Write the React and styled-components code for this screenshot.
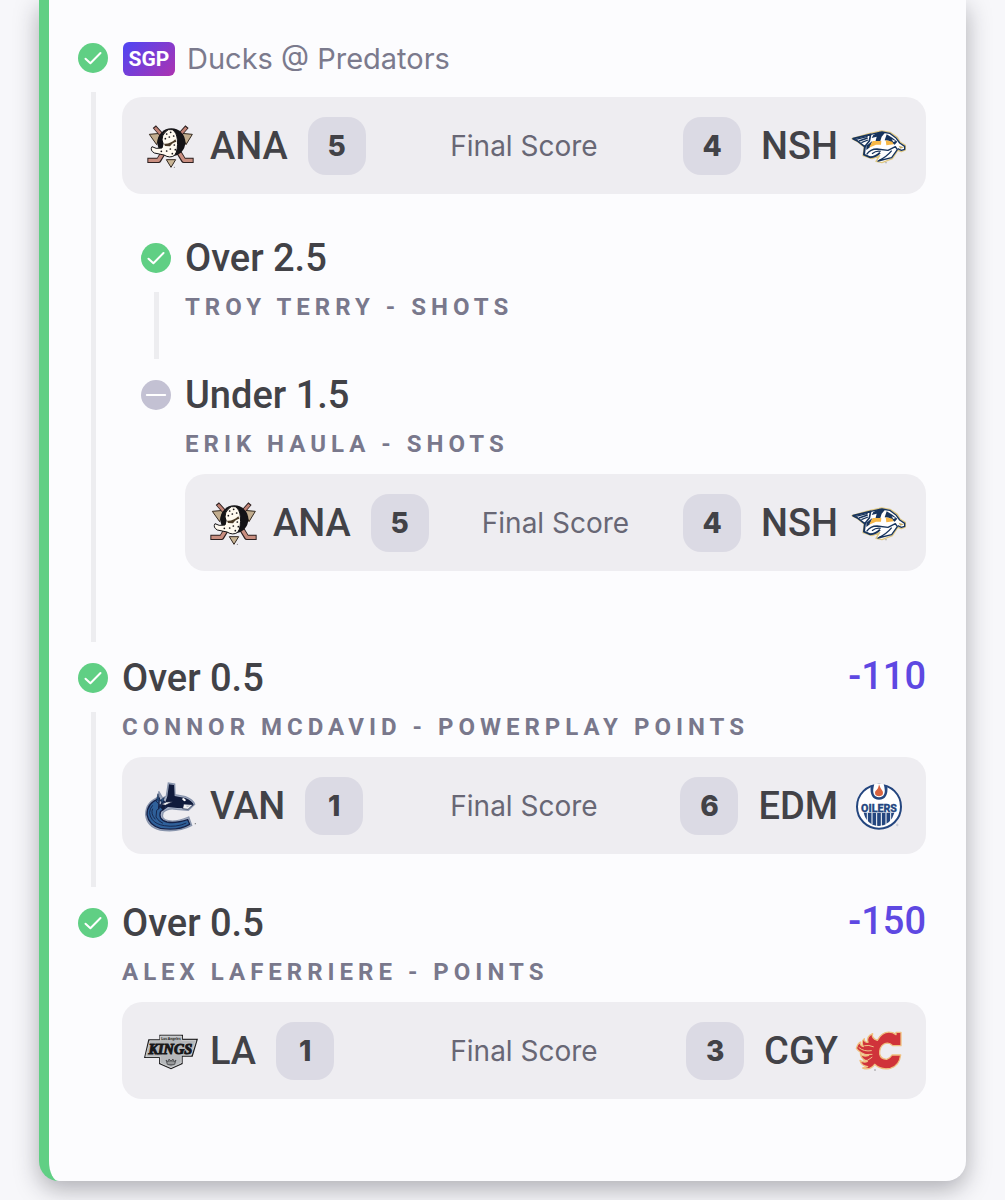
import React from "react";
import styled, { createGlobalStyle } from "styled-components";

const GlobalStyle = createGlobalStyle`
  * { box-sizing: border-box; }
  body {
    margin: 0;
    background: #f7f7fa;
    font-family: Roboto, "Liberation Sans", sans-serif;
    color: #424247;
  }
  ul { list-style: none; margin: 0; padding: 0; }
  h2, h3, p { margin: 0; font-weight: inherit; }
`;

const Page = styled.main`
  padding: 0 39px 19px;
  overflow: hidden;
`;

const BetCard = styled.section`
  padding: 33px 40px 38px 29px;
  background: #fcfcfe;
  border-left: 10px solid #60cf84;
  border-radius: 0 0 20px 20px;
  box-shadow: 0 8px 24px rgba(30, 30, 40, 0.34);
`;

const Leg = styled.li`
  display: flex;
  gap: 14px;
`;

const Rail = styled.div`
  display: flex;
  flex-direction: column;
  align-items: center;
  gap: 19px;
  flex: 0 0 30px;
  padding: 10px 0 11px;
`;

const StatusIcon = styled.svg`
  display: block;
  width: 30px;
  height: 30px;
`;

const RailLine = styled.span`
  flex: 1;
  width: 5px;
  background: #ededf0;
`;

const LegBody = styled.div`
  flex: 1;
  min-width: 0;
  padding-bottom: ${(p) => (p.$hasNested ? "38px" : "44px")};
`;

const LegHeader = styled.div`
  display: flex;
  align-items: center;
  justify-content: space-between;
  height: 50px;
`;

const Selection = styled.h3`
  font-size: 38px;
  line-height: 50px;
  font-weight: 500;
`;

const Odds = styled.span`
  font-size: 38px;
  line-height: 46px;
  height: 50px;
  font-weight: 500;
  color: #5e48e2;
`;

const Market = styled.p`
  margin-top: 10px;
  font-size: 24px;
  line-height: 28px;
  font-weight: 700;
  letter-spacing: 5px;
  text-transform: uppercase;
  color: #79788c;
  min-height: ${(p) => (p.$alone ? "33px" : "28px")};
`;

const GameHeader = styled.div`
  display: flex;
  align-items: center;
  gap: 12px;
  height: 50px;
  padding: 1px 0 0 1px;
`;

const SgpBadge = styled.span`
  display: flex;
  align-items: center;
  justify-content: center;
  width: 52px;
  height: 34px;
  border-radius: 6px;
  background: linear-gradient(135deg, #5644ee 10%, #ad32b0 100%);
  color: #fff;
  font: 700 21px Roboto, "Liberation Sans", sans-serif;
`;

const GameName = styled.h2`
  font: 400 29px Inter, "Liberation Sans", sans-serif;
  color: #7b7a8d;
`;

const ScoreBox = styled.div`
  display: grid;
  grid-template-columns: 1fr auto 1fr;
  align-items: center;
  height: 97px;
  margin-top: ${(p) => (p.$tight ? "14px" : "16px")};
  padding: 0 20px;
  border-radius: 20px;
  background: #eeedf1;
`;

const Side = styled.div`
  display: flex;
  align-items: center;
  flex-direction: ${(p) => (p.$away ? "row" : "row-reverse")};
`;

const TeamCode = styled.span`
  margin: 0 ${(p) => (p.$away ? "20px" : "12px")} 0 ${(p) => (p.$away ? "12px" : "20px")};
  font-size: 38px;
  line-height: 50px;
  font-weight: 500;
`;

const Score = styled.span`
  display: grid;
  place-items: center;
  width: 58px;
  height: 58px;
  border-radius: 18px;
  background: #dbdae4;
  font: 800 28px Inter, "Liberation Sans", sans-serif;
`;

const GameStatus = styled.span`
  font: 400 28px Inter, "Liberation Sans", sans-serif;
  color: #686775;
`;

const NestedLegs = styled.ul`
  margin-top: 39px;
  padding-left: 19px;
`;

const Logo = styled.svg`
  display: block;
  width: 56px;
  height: 56px;
`;

const logos = {
  ANA: (
    <Logo viewBox="36 22 168 168" role="img" aria-label="Anaheim">
      <path d="M58 71 L92 68 L80 102Z M187 71 L154 68 L168 102Z" fill="#c2ad8e" stroke="#33291f" strokeWidth="3" />
      <g fill="none" strokeLinecap="butt" strokeLinejoin="round">
        <path d="M73 48 L98 76 M171 48 L146 76" stroke="#2d2020" strokeWidth="13" />
        <path d="M75 51 L98 76 M169 51 L146 76" stroke="#c08376" strokeWidth="8" />
        <path d="M145 122 L161 149 H191 M102 122 L86 149 H52" stroke="#2d2020" strokeWidth="16" />
        <path d="M145 122 L162 149 H188 M102 122 L85 149 H55" stroke="#c98e80" strokeWidth="10" />
      </g>
      <circle cx="124" cy="95" r="42" fill="#141316" />
      <path d="M105 65 Q114 53 127 57 Q140 65 142 86 Q145 119 134 134 Q120 144 102 133 Q88 130 73 127 Q59 119 66 108 Q76 116 96 112 Q103 98 96 88 Q96 74 105 65Z" fill="#fffaf0" stroke="#141316" strokeWidth="3" />
      <path d="M102 99 Q120 101 136 86 L139 93 Q125 97 120 107 L105 106Z" fill="#4b3b27" />
      <g fill="#141316">
        {[[110,70],[122,65],[118,79],[131,76],[106,84],[133,103],[121,115],[136,117],[110,121],[127,129],[94,122]].map(([x, y]) => (
          <circle key={`${x}-${y}`} cx={x} cy={y} r="2.6" />
        ))}
      </g>
      <path d="M109 147 H137 L123 170Z" fill="#c9b595" stroke="#332820" strokeWidth="3" />
      <circle cx="133" cy="170" r="1.5" fill="#555" />
    </Logo>
  ),
  NSH: (
    <Logo viewBox="30 8 168 168" role="img" aria-label="Nashville">
      <path d="M36 70 L84 56 L125 47 L150 51 L172 66 L180 80 L197 91 L196 104 L184 109 L173 105 L157 130 L126 142 L108 138 L119 121 L96 130 L69 121 L73 96 L51 78Z" fill="#fff" stroke="#dfc780" strokeWidth="4" strokeLinejoin="round" />
      <g fill="none" stroke="#17345d" strokeWidth="4" strokeLinejoin="round">
        <path d="M39 70 L92 57 L88 77 L74 94 L54 78Z" strokeWidth="5" />
        <path d="M48 72 L83 63 M57 77 L83 68 M64 82 L84 74" />
        <path d="M92 57 L126 50 L149 54 L169 69 L179 83 L194 93 V102 L184 105 L173 100" />
        <path d="M75 92 L72 118 L91 126 Q108 125 120 112" strokeWidth="6" />
        <path d="M80 117 Q91 101 111 101 L144 105 L166 94 L172 103 L155 127 L114 137 Q140 125 155 106 M96 115 Q109 105 122 108" />
      </g>
      <path d="M119 49 L135 52 L125 64 L120 80 L106 80 L110 64 L95 68 L100 59Z M140 57 L157 67 L172 79 L164 88 L147 76 L134 75Z M79 91 L97 77 L90 96 L79 104Z" fill="#17345d" />
      <path d="M98 77 L124 77 L123 88 L108 88 L87 97Z M137 75 L157 79 L161 87 L139 90Z" fill="#f6b747" />
      <path d="M155 72 L167 77 L160 80Z M171 88 L190 96 L180 98Z" fill="#fff" />
      <path d="M176 91 L192 96 L181 100Z" fill="#c3aa68" />
      <circle cx="138" cy="142" r="1.8" fill="#888" />
    </Logo>
  ),
  VAN: (
    <Logo viewBox="36 22 168 168" role="img" aria-label="Vancouver">
      <path d="M89 79 Q47 93 47 132 Q51 169 91 178 Q145 186 185 164 L176 139 Q139 155 115 150 Q92 147 99 126 Q113 111 139 116 L175 119 L194 101 Q189 87 166 78 L135 72 L134 40 L115 37 L109 76 L98 82 L86 62Z" fill="#a8b2c7" stroke="#8995ad" strokeWidth="4" />
      <path d="M88 83 Q50 98 51 132 Q56 163 91 173 Q145 181 179 161 L173 147 Q136 159 111 154 Q83 147 92 122 L115 106 L101 91 L86 111Z" fill="#2f609a" stroke="#14224a" strokeWidth="4" />
      <path d="M117 41 L132 43 L134 76 L166 82 Q188 91 191 103 L174 113 L142 112 L107 108 L99 120 L90 108 L106 94 L112 77Z" fill="#101b3c" />
      <path d="M161 100 L189 102 L174 116 L158 114Z M128 93 L106 104 L94 101 L109 94Z" fill="#f2f3f5" stroke="#101b3c" strokeWidth="2" />
      <ellipse cx="162" cy="87" rx="6" ry="3.5" fill="#fff" transform="rotate(35 162 87)" />
      <path d="M167 105 L182 104 L172 110Z" fill="#b7bcc7" />
      <path d="M68 104 Q50 125 67 147 Q78 161 103 165 Q139 171 169 157 M78 91 L94 108 L80 119 L78 139 Q86 153 99 158 M68 114 Q61 129 76 146" fill="none" stroke="#172951" strokeWidth="3" />
      <path d="M84 69 L87 86 L96 91 L80 87Z M91 88 L103 81 L96 98Z" fill="#27588b" stroke="#17284e" strokeWidth="2" />
      <circle cx="196" cy="159" r="2" fill="#777" />
    </Logo>
  ),
  EDM: (
    <Logo viewBox="30 22 168 168" role="img" aria-label="Edmonton">
      <circle cx="117" cy="108" r="66" fill="#fff" stroke="#24467f" strokeWidth="6" />
      <path d="M92 45 Q88 86 117 87 Q146 86 142 45" fill="#24467f" />
      <path d="M103 40 Q92 79 117 80 Q142 79 131 40Z" fill="#fff" />
      <path d="M117 41 Q116 54 106 62 Q101 76 117 77 Q133 76 128 62 Q121 54 117 41Z" fill="#d9633f" />
      <path d="M71 126 H163 Q153 163 117 166 Q80 163 71 126Z" fill="#24467f" />
      <path d="M82 126 V151 M96 126 V160 M110 126 V167 M124 126 V167 M138 126 V160 M152 126 V151" stroke="#fff" strokeWidth="3" />
      <text x="117" y="124" textAnchor="middle" fill="#24467f" stroke="#24467f" strokeWidth="1" fontFamily="Roboto, sans-serif" fontWeight="800" fontSize="32">OILERS</text>
      <circle cx="172" cy="163" r="2.5" fill="none" stroke="#78869b" />
    </Logo>
  ),
  LA: (
    <Logo viewBox="36 8 168 168" role="img" aria-label="Los Angeles">
      <path d="M88 43 H159 V55 H204 L188 109 H158 V131 L123 147 L87 131 V113 H42 L55 57 H88Z" fill="#1c1c1e" />
      <path d="M91 47 H155 V60 H198 L184 105 H154 V128 L123 142 L91 128 V109 H47 L59 61 H91Z" fill="#b5b8bb" stroke="#f4f4f4" strokeWidth="2" />
      <text x="123" y="59" textAnchor="middle" fontFamily="Liberation Sans" fontWeight="700" fontSize="10" fill="#222">Los Angeles</text>
      <text x="121" y="101" textAnchor="middle" fontFamily="Liberation Serif, serif" fontStyle="italic" fontWeight="700" fontSize="43" fill="#171719" stroke="#171719" strokeWidth="3">KINGS</text>
      <path d="M108 119 L114 124 L117 116 L123 122 L129 116 L132 124 L138 119 L134 132 Q123 137 112 132Z" fill="#77797b" stroke="#3a3a3c" strokeWidth="2" />
      <path d="M113 128 H133" stroke="#ddd" strokeWidth="2" />
    </Logo>
  ),
  CGY: (
    <Logo viewBox="30 8 168 168" role="img" aria-label="Calgary">
      <path d="M183 76 H158 Q147 64 132 71 Q118 79 119 101 Q122 116 140 117 Q151 113 156 104 H182 Q178 137 151 144 Q123 150 104 132 Q91 151 68 143 L83 139 Q63 136 60 120 Q72 128 82 123 Q64 118 61 100 Q70 111 86 105 Q60 100 49 84 Q53 70 61 65 Q60 76 70 79 Q62 63 73 55 Q72 66 84 66 Q78 49 98 40 Q93 53 112 60 Q129 29 158 37 L168 43 V36 H183Z" fill="#d0333a" stroke="#efc080" strokeWidth="4" strokeLinejoin="round" />
      <path d="M57 82 Q72 95 94 91 M70 105 Q85 101 96 102 M69 122 Q84 123 96 111 M74 76 Q86 73 100 79" fill="none" stroke="#f1c58a" strokeWidth="3" strokeLinecap="round" />
      <circle cx="105" cy="149" r="2" fill="#777" />
    </Logo>
  ),
};

function Status({ type }) {
  const won = type === "won";
  return (
    <StatusIcon viewBox="0 0 30 30" role="img" aria-label={won ? "Won" : "Void"}>
      <circle cx="15" cy="15" r="15" fill={won ? "#60cf84" : "#c3c1d3"} />
      <path d={won ? "M7.5 15.7 L12.4 20.3 L22.5 10" : "M5.8 15 H24.2"} fill="none" stroke="#fff" strokeWidth="2" strokeLinecap="round" strokeLinejoin="round" />
    </StatusIcon>
  );
}

function TeamSide({ team, score, away }) {
  return (
    <Side $away={away}>
      {logos[team]}
      <TeamCode $away={away}>{team}</TeamCode>
      <Score>{score}</Score>
    </Side>
  );
}

function Scoreboard({ game, tight }) {
  return (
    <ScoreBox $tight={tight}>
      <TeamSide team={game.away} score={game.awayScore} away />
      <GameStatus>Final Score</GameStatus>
      <TeamSide team={game.home} score={game.homeScore} />
    </ScoreBox>
  );
}

function BetLeg({ leg, last }) {
  return (
    <Leg>
      <Rail>
        <Status type={leg.status} />
        {!last && <RailLine />}
      </Rail>
      <LegBody $hasNested={Boolean(leg.legs)}>
        {leg.name ? (
          <GameHeader>
            <SgpBadge>SGP</SgpBadge>
            <GameName>{leg.name}</GameName>
          </GameHeader>
        ) : (
          <>
            <LegHeader>
              <Selection>{leg.pick}</Selection>
              {leg.odds && <Odds>{leg.odds}</Odds>}
            </LegHeader>
            <Market $alone={!leg.game}>{leg.market}</Market>
          </>
        )}
        {leg.game && <Scoreboard game={leg.game} tight={Boolean(leg.name)} />}
        {leg.legs && (
          <NestedLegs>
            {leg.legs.map((item, i) => (
              <BetLeg key={item.market} leg={item} last={i === leg.legs.length - 1} />
            ))}
          </NestedLegs>
        )}
      </LegBody>
    </Leg>
  );
}

const ducksGame = { away: "ANA", awayScore: 5, home: "NSH", homeScore: 4 };

const betLegs = [
  {
    status: "won",
    name: "Ducks @ Predators",
    game: ducksGame,
    legs: [
      { status: "won", pick: "Over 2.5", market: "Troy Terry - Shots" },
      { status: "void", pick: "Under 1.5", market: "Erik Haula - Shots", game: ducksGame },
    ],
  },
  {
    status: "won",
    pick: "Over 0.5",
    odds: "-110",
    market: "Connor McDavid - Powerplay Points",
    game: { away: "VAN", awayScore: 1, home: "EDM", homeScore: 6 },
  },
  {
    status: "won",
    pick: "Over 0.5",
    odds: "-150",
    market: "Alex Laferriere - Points",
    game: { away: "LA", awayScore: 1, home: "CGY", homeScore: 3 },
  },
];

export default function App() {
  return (
    <>
      <GlobalStyle />
      <Page>
        <BetCard>
          <ul>
            {betLegs.map((leg, i) => (
              <BetLeg key={leg.name || leg.market} leg={leg} last={i === betLegs.length - 1} />
            ))}
          </ul>
        </BetCard>
      </Page>
    </>
  );
}
